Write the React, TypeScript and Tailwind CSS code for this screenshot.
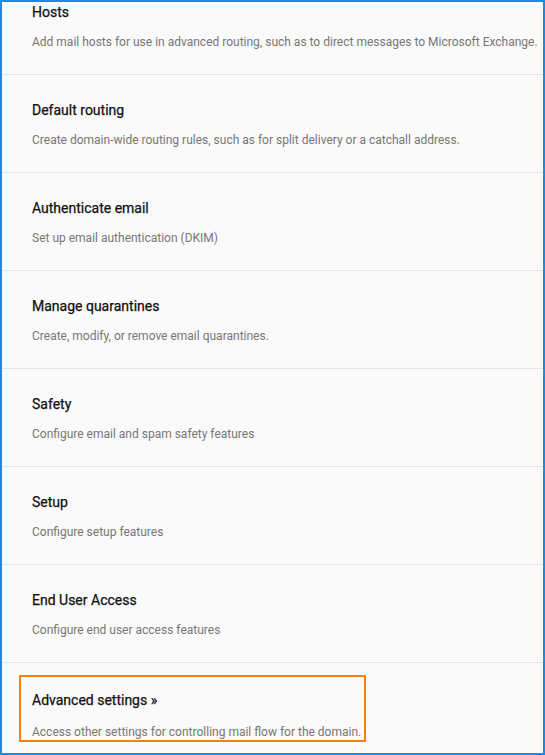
import React from 'react';

const rows = [
  { title: 'Hosts', desc: 'Add mail hosts for use in advanced routing, such as to direct messages to Microsoft Exchange.' },
  { title: 'Default routing', desc: 'Create domain-wide routing rules, such as for split delivery or a catchall address.' },
  { title: 'Authenticate email', desc: 'Set up email authentication (DKIM)' },
  { title: 'Manage quarantines', desc: 'Create, modify, or remove email quarantines.' },
  { title: 'Safety', desc: 'Configure email and spam safety features' },
  { title: 'Setup', desc: 'Configure setup features' },
  { title: 'End User Access', desc: 'Configure end user access features' },
];

export default function App() {
  return (
    <div
      className="w-[545px] h-[755px] overflow-hidden border-2 border-[#1e88e5] bg-[#fafafa]"
      style={{ fontFamily: 'Roboto, "Liberation Sans", sans-serif' }}
    >
      <div className="-mt-[25px]">
        {rows.map((r) => (
          <div key={r.title} className="h-[98px] border-b border-[#e4e4e4] pl-[30px] pt-[25px]">
            <div className="text-[14px] leading-[20px] font-normal text-[#111] [-webkit-text-stroke:0.25px_#111]">{r.title}</div>
            <div className="mt-[12px] text-[12px] leading-[16px] text-[#777] whitespace-nowrap">{r.desc}</div>
          </div>
        ))}
        <div className="pl-[17px] pt-[12px]">
          <div className="w-[347px] border-2 border-[#ff8000] pl-[11px] pt-[13px]">
            <div className="text-[14px] leading-[20px] font-normal text-[#111] [-webkit-text-stroke:0.25px_#111]">Advanced settings »</div>
            <div className="mt-[14px] text-[12px] leading-[16px] text-[#777] whitespace-nowrap">
              Access other settings for controlling mail flow for the domain.
            </div>
          </div>
        </div>
      </div>
    </div>
  );
}
